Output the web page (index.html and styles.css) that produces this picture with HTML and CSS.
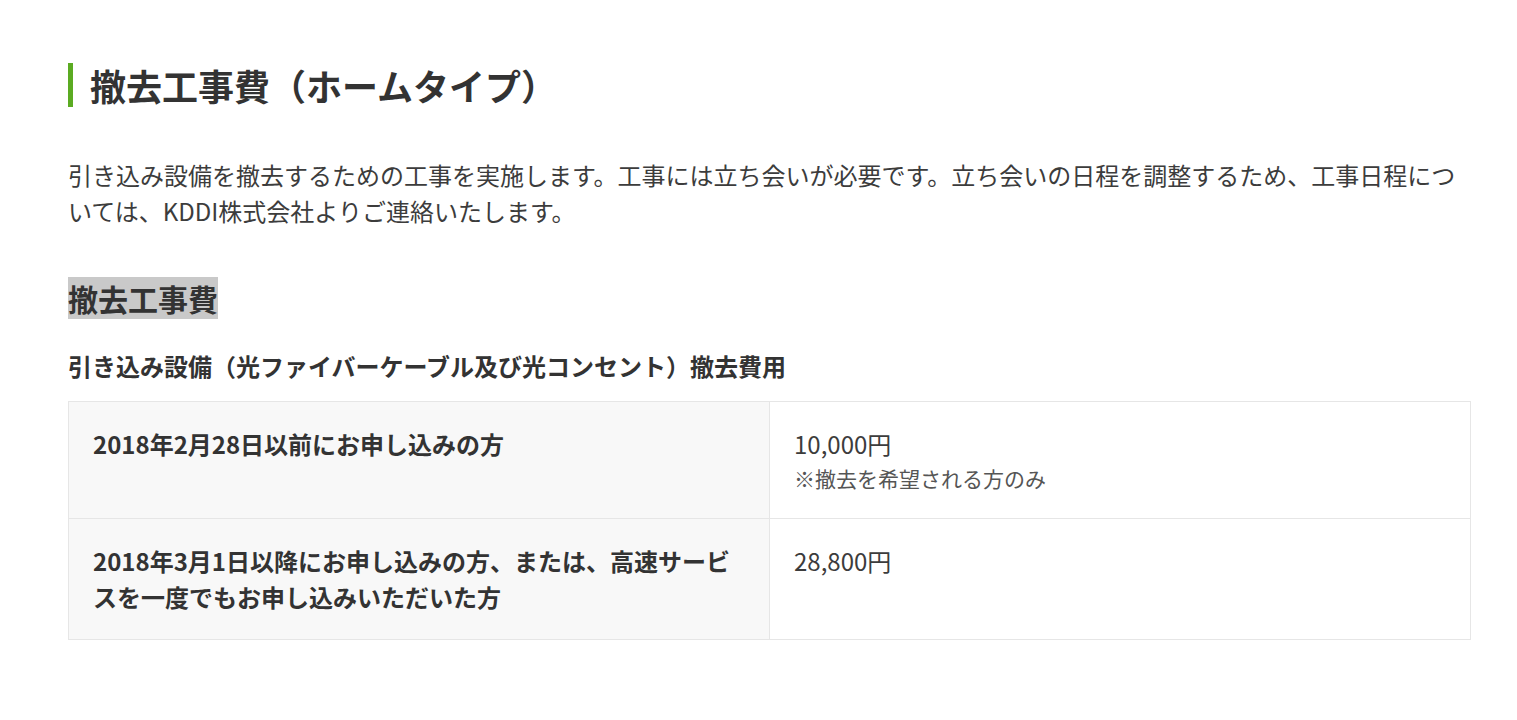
FILE: index.html
```html
<!DOCTYPE html>
<html lang="ja">
<head>
<meta charset="utf-8">
<title>撤去工事費（ホームタイプ）</title>
<link rel="stylesheet" href="styles.css">
</head>
<body>
<main class="content">
  <h2 class="title">撤去工事費（ホームタイプ）</h2>
  <p class="lead">引き込み設備を撤去するための工事を実施します。工事には立ち会いが必要です。立ち会いの日程を調整するため、工事日程については、KDDI株式会社よりご連絡いたします。</p>
  <h3 class="subtitle"><span class="mark">撤去工事費</span></h3>
  <p class="label">引き込み設備（光ファイバーケーブル及び光コンセント）撤去費用</p>
  <table class="fee">
    <colgroup><col class="col-half"><col class="col-half"></colgroup>
    <tr>
      <th class="fee-head">2018年2月28日以前にお申し込みの方</th>
      <td class="fee-val">10,000円<span class="note">※撤去を希望される方のみ</span></td>
    </tr>
    <tr>
      <th class="fee-head">2018年3月1日以降にお申し込みの方、または、高速サービスを一度でもお申し込みいただいた方</th>
      <td class="fee-val">28,800円</td>
    </tr>
  </table>
</main>
</body>
</html>
```
FILE: styles.css
```css
html, body {
  margin: 0;
  padding: 0;
  background: #fff;
}
body {
  font-family: "Noto Sans CJK JP", "Noto Sans", sans-serif;
  color: #333;
}
.content {
  width: 1403px;
  margin: 0 0 0 68px;
  padding-top: 63px;
}
.title {
  margin: 0;
  border-left: 5px solid #5bab22;
  padding-left: 17px;
  font-size: 36px;
  line-height: 44px;
  font-weight: 700;
  color: #333;
}
.lead {
  margin: 50px 0 0;
  font-size: 24px;
  line-height: 36px;
  font-weight: 400;
  color: #3c3c3c;
}
.subtitle {
  margin: 48px 0 0;
  font-size: 30px;
  line-height: 42px;
  font-weight: 700;
}
.mark {
  display: inline-block;
  background: #c9c9c9;
}
.label {
  margin: 29px 0 0;
  font-size: 24px;
  line-height: 36px;
  font-weight: 700;
}
.fee {
  margin-top: 17px;
  width: 100%;
  border-collapse: collapse;
  table-layout: fixed;
  border: 1px solid #e6e6e6;
}
.col-half {
  width: 50%;
}
.fee th, .fee td {
  border: 1px solid #e6e6e6;
  padding: 24px 24px;
  vertical-align: top;
  text-align: left;
  font-size: 24px;
  line-height: 36px;
}
.fee-head {
  background: #f8f8f8;
  font-weight: 700;
}
.fee-val {
  background: #fff;
  font-weight: 400;
  color: #3c3c3c;
}
.note {
  display: block;
  font-size: 21px;
  line-height: 32px;
  color: #555;
}
```
